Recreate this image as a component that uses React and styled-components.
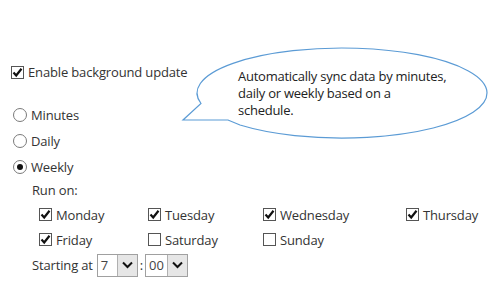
import React from "react";
import styled, { createGlobalStyle } from "styled-components";

const Global = createGlobalStyle`
  html, body { margin: 0; padding: 0; background: #fff; }
  body { font-family: "Open Sans", "Noto Sans", sans-serif; font-size: 13px; letter-spacing: -0.15px; color: #333; }
`;

const Page = styled.div`
  position: relative;
  width: 500px;
  height: 299px;
  box-sizing: border-box;
  padding: 62px 0 0 11px;
  overflow: hidden;
`;

const Row = styled.label`
  display: flex;
  align-items: center;
  height: ${(p) => p.$h || 20}px;
  gap: 4px;
  white-space: nowrap;
`;

const BoxMark = styled.span`
  width: 13px;
  height: 13px;
  box-sizing: border-box;
  border: 1px solid #555;
  background: #fff;
  display: inline-flex;
  align-items: center;
  justify-content: center;
  flex: none;
`;

const RadioMark = styled.span`
  width: 14px;
  height: 14px;
  box-sizing: border-box;
  border: 1px solid #7a7a7a;
  border-radius: 50%;
  background: #fff;
  display: inline-flex;
  align-items: center;
  justify-content: center;
  flex: none;
  margin-left: 2px;
  &::after {
    content: "";
    display: ${(p) => (p.$on ? "block" : "none")};
    width: 6px;
    height: 6px;
    border-radius: 50%;
    background: #111;
  }
`;

const RadioGroup = styled.div`
  margin-top: 20px;
  display: flex;
  flex-direction: column;
`;

const Indented = styled.div`
  padding-left: 21px;
`;

const DaysGrid = styled.div`
  display: grid;
  grid-template-columns: 109px 115px 143px auto;
  grid-auto-rows: 25px;
  margin-top: 2px;
  padding-left: 7px;
`;

const StartRow = styled.div`
  display: flex;
  align-items: center;
  height: 24px;
  margin-top: 1px;
`;

const Select = styled.div`
  display: flex;
  height: 23px;
  box-sizing: border-box;
  border: 1px solid #a0a0a0;
  background: #fff;
  margin-left: ${(p) => p.$ml || 0}px;
`;

const SelectValue = styled.span`
  width: ${(p) => p.$w}px;
  padding-left: 3px;
  box-sizing: border-box;
  display: flex;
  align-items: center;
  font-size: 13px;
  color: #444;
`;

const SelectButton = styled.span`
  width: 19px;
  background: #e6e6e6;
  border-left: 1px solid #b0b0b0;
  display: flex;
  align-items: center;
  justify-content: center;
`;

const Colon = styled.span`
  margin: 0 2px 0 2px;
`;

const Balloon = styled.div`
  position: absolute;
  left: 180px;
  top: 44px;
  width: 312px;
  height: 100px;
`;

const BalloonSvg = styled.svg`
  position: absolute;
  left: 0;
  top: 0;
`;

const BalloonText = styled.div`
  position: absolute;
  left: 58px;
  top: 24px;
  line-height: 17px;
  white-space: nowrap;
  color: #222;
  letter-spacing: -0.25px;
`;

const Check = () => (
  <svg width="11" height="11" viewBox="0 0 11 11">
    <path d="M1.5 5.5 L4.2 8.5 L9.5 1.8" fill="none" stroke="#111" strokeWidth="2.2" />
  </svg>
);

const CheckBox = ({ on, children }) => (
  <Row $h={25}>
    <BoxMark>{on && <Check />}</BoxMark>
    {children}
  </Row>
);

const Chevron = () => (
  <svg width="11" height="8" viewBox="0 0 11 8">
    <path d="M1 1.5 L5.5 6 L10 1.5" fill="none" stroke="#111" strokeWidth="2" />
  </svg>
);

export default function App() {
  const days = [
    ["Monday", true],
    ["Tuesday", true],
    ["Wednesday", true],
    ["Thursday", true],
    ["Friday", true],
    ["Saturday", false],
    ["Sunday", false],
  ];
  return (
    <>
      <Global />
      <Page>
        <Row $h={20}>
          <BoxMark>
            <Check />
          </BoxMark>
          Enable background update
        </Row>
        <RadioGroup>
          <Row $h={26}>
            <RadioMark />
            Minutes
          </Row>
          <Row $h={26}>
            <RadioMark />
            Daily
          </Row>
          <Row $h={26}>
            <RadioMark $on />
            Weekly
          </Row>
        </RadioGroup>
        <Indented>
          <Row $h={20}>Run on:</Row>
          <DaysGrid>
            {days.map(([d, on]) => (
              <CheckBox key={d} on={on}>
                {d}
              </CheckBox>
            ))}
          </DaysGrid>
          <StartRow>
            Starting at
            <Select $ml={4}>
              <SelectValue $w={19}>7</SelectValue>
              <SelectButton>
                <Chevron />
              </SelectButton>
            </Select>
            <Colon>:</Colon>
            <Select>
              <SelectValue $w={21}>00</SelectValue>
              <SelectButton>
                <Chevron />
              </SelectButton>
            </Select>
          </StartRow>
        </Indented>
        <Balloon>
          <BalloonSvg width="312" height="100" viewBox="0 0 312 100">
            <path
              d="M21 59.5 A145 45 0 1 1 60 81 L48 76 L3 76 Z"
              fill="#fff"
              stroke="#5b9bd5"
              strokeWidth="1.2"
            />
          </BalloonSvg>
          <BalloonText>
            Automatically sync data by minutes,
            <br />
            daily or weekly based on a
            <br />
            schedule.
          </BalloonText>
        </Balloon>
      </Page>
    </>
  );
}
